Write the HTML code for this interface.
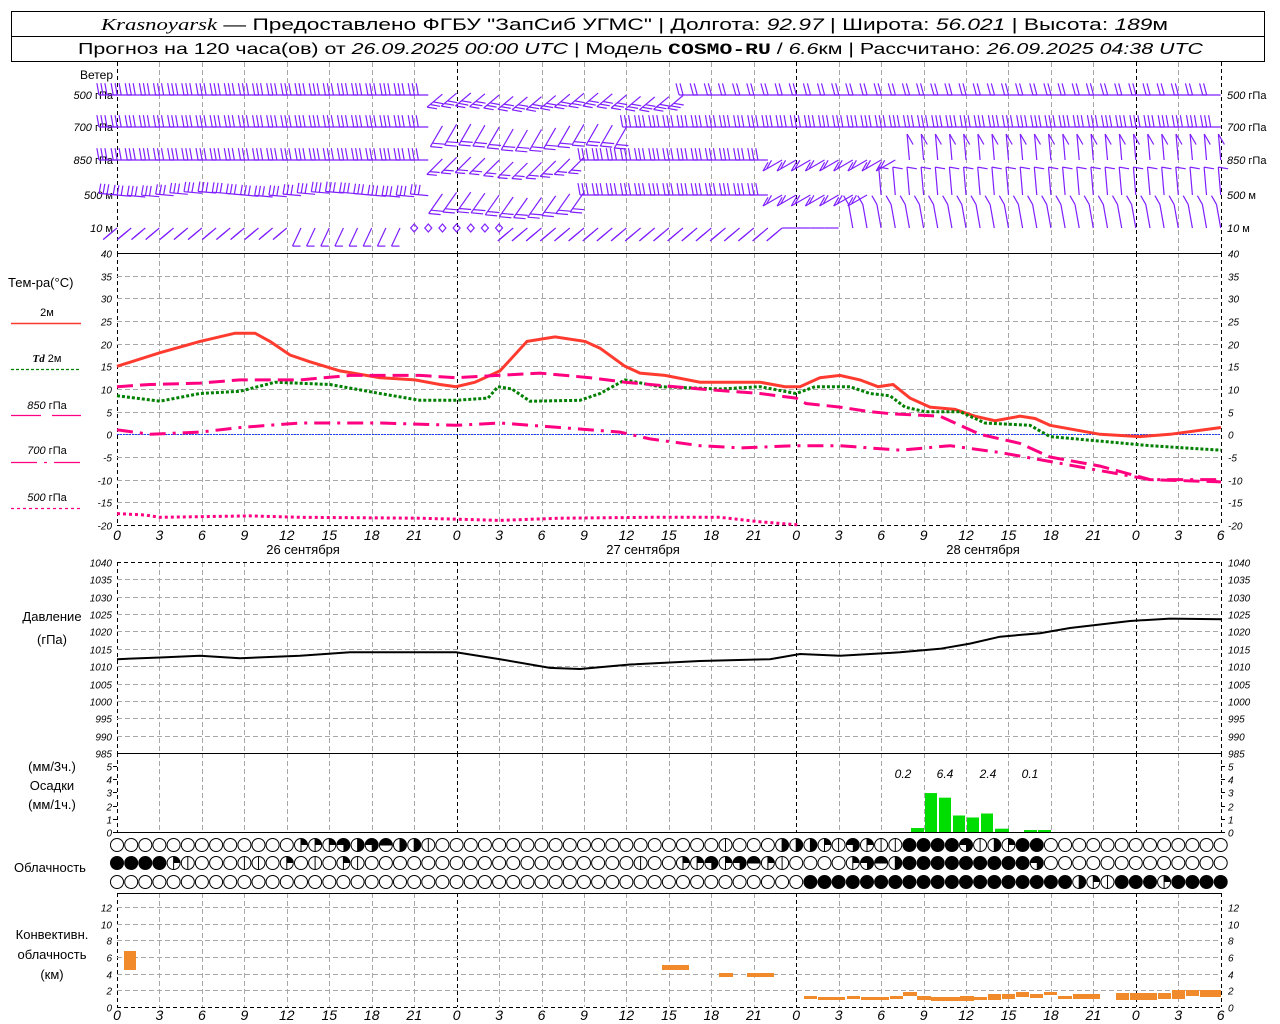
<!DOCTYPE html>
<html><head><meta charset="utf-8">
<style>
html,body{margin:0;padding:0;background:#fff;}
svg{display:block;}
text{font-family:"Liberation Sans",sans-serif;fill:#000;}
.it{font-style:italic;}
.sm{font-size:10px;font-style:italic;}
.lb{font-size:12px;}
</style></head><body>
<svg id="s" width="1280" height="1024" viewBox="0 0 1280 1024" xmlns="http://www.w3.org/2000/svg">
<rect x="0" y="0" width="1280" height="1024" fill="#fff"/>
<rect x="11.5" y="11.5" width="1253" height="50" fill="none" stroke="#000" stroke-width="1"/>
<line x1="11" y1="36.5" x2="1265" y2="36.5" stroke="#000"/>
<text x="101" y="30" font-size="17" textLength="1067" lengthAdjust="spacingAndGlyphs"><tspan font-family="Liberation Serif" font-style="italic">Krasnoyarsk</tspan> — Предоставлено ФГБУ "ЗапСиб УГМС" | Долгота: <tspan font-style="italic">92.97</tspan> | Широта: <tspan font-style="italic">56.021</tspan> | Высота: <tspan font-style="italic">189</tspan>м</text>
<text x="78" y="54" font-size="16" textLength="1125" lengthAdjust="spacingAndGlyphs">Прогноз на 120 часа(ов) от <tspan font-style="italic">26.09.2025 00:00 UTC</tspan>  | Модель <tspan font-family="Liberation Mono" font-weight="bold">COSMO-RU</tspan> / <tspan font-style="italic">6.6</tspan>км | Рассчитано: <tspan font-style="italic">26.09.2025 04:38 UTC</tspan></text>

<g class="lb">
<text x="113" y="79" text-anchor="end">Ветер</text>
<text x="113" y="99" text-anchor="end" font-size="11"><tspan font-style="italic">500</tspan> гПа</text>
<text x="113" y="131" text-anchor="end" font-size="11"><tspan font-style="italic">700</tspan> гПа</text>
<text x="113" y="164" text-anchor="end" font-size="11"><tspan font-style="italic">850</tspan> гПа</text>
<text x="113" y="199" text-anchor="end" font-size="11"><tspan font-style="italic">500</tspan>  м</text>
<text x="113" y="232" text-anchor="end" font-size="11"><tspan font-style="italic">10</tspan>   м</text>
<text x="1227" y="99" font-size="11"><tspan font-style="italic">500</tspan> гПа</text>
<text x="1227" y="131" font-size="11"><tspan font-style="italic">700</tspan> гПа</text>
<text x="1227" y="164" font-size="11"><tspan font-style="italic">850</tspan> гПа</text>
<text x="1227" y="199" font-size="11"><tspan font-style="italic">500</tspan>  м</text>
<text x="1227" y="232" font-size="11"><tspan font-style="italic">10</tspan>   м</text>

<text x="8" y="287" font-size="13">Тем-ра(°С)</text>
<text x="47" y="316" text-anchor="middle" font-size="11">2м</text>
<text x="47" y="362" text-anchor="middle" font-size="11"><tspan font-family="Liberation Serif" font-style="italic" font-weight="bold">Td</tspan>  2м</text>
<text x="47" y="409" text-anchor="middle" font-size="11"><tspan font-style="italic">850</tspan> гПа</text>
<text x="47" y="454" text-anchor="middle" font-size="11"><tspan font-style="italic">700</tspan> гПа</text>
<text x="47" y="501" text-anchor="middle" font-size="11"><tspan font-style="italic">500</tspan> гПа</text>

<text x="303" y="554" text-anchor="middle" font-size="13">26 сентября</text>
<text x="643" y="554" text-anchor="middle" font-size="13">27 сентября</text>
<text x="983" y="554" text-anchor="middle" font-size="13">28 сентября</text>

<text x="52" y="621" text-anchor="middle" font-size="13">Давление</text>
<text x="52" y="644" text-anchor="middle" font-size="13">(гПа)</text>
<text x="52" y="771" text-anchor="middle" font-size="13">(мм/3ч.)</text>
<text x="52" y="790" text-anchor="middle" font-size="13">Осадки</text>
<text x="52" y="809" text-anchor="middle" font-size="13">(мм/1ч.)</text>
<text x="50" y="872" text-anchor="middle" font-size="13">Облачность</text>
<text x="52" y="939" text-anchor="middle" font-size="13">Конвективн.</text>
<text x="52" y="959" text-anchor="middle" font-size="13">облачность</text>
<text x="52" y="979" text-anchor="middle" font-size="13">(км)</text>

<text x="903" y="778" text-anchor="middle" font-size="12" class="it">0.2</text>
<text x="945" y="778" text-anchor="middle" font-size="12" class="it">6.4</text>
<text x="988" y="778" text-anchor="middle" font-size="12" class="it">2.4</text>
<text x="1030" y="778" text-anchor="middle" font-size="12" class="it">0.1</text>
</g>
<line x1="11" y1="323.5" x2="81" y2="323.5" stroke="#ff3b30" stroke-width="1.5"/>
<line x1="11" y1="369.5" x2="81" y2="369.5" stroke="#008000" stroke-width="1.2" stroke-dasharray="3,2"/>
<line x1="11" y1="415.5" x2="81" y2="415.5" stroke="#ff0080" stroke-width="1.2" stroke-dasharray="30,11"/>
<line x1="11" y1="462.5" x2="81" y2="462.5" stroke="#ff0080" stroke-width="1.2" stroke-dasharray="26,7,3,7"/>
<line x1="11" y1="508.5" x2="81" y2="508.5" stroke="#ff0080" stroke-width="1.2" stroke-dasharray="3,3"/>
<g id="g"></g>
</svg>
<script>
(function(){
var g=document.getElementById('g'),h='';
var X0=117,PX=14.15,XR=1221;
function hx(hh){return X0+hh*PX;}
function L(x1,y1,x2,y2,st){h+='<line x1="'+x1.toFixed(1)+'" y1="'+y1.toFixed(1)+'" x2="'+x2.toFixed(1)+'" y2="'+y2.toFixed(1)+'" '+st+'/>';}
var GR='stroke="#a8a8a8" stroke-width="1" stroke-dasharray="5,3"';
var DK='stroke="#000" stroke-width="1" stroke-dasharray="4,3"';
var panels=[[62,253],[253,525],[562,753],[753,832],[893,1007]];
for(var k=0;k<=26;k++){var x=Math.round(X0+k*42.45)+0.5;var day=(k%8==0)||k==26;
 panels.forEach(function(p){L(x,p[0],x,p[1],day?DK:GR);});}
function ty(t){return 253+(40-t)*4.533;}
var tl=['40','35','30','25','20','15','10','5','0','-5','-10','-15','-20'];
for(var i=0;i<13;i++){var t=40-5*i,y=Math.round(ty(t))+0.5;
 if(i>0&&i<12)L(X0,y,XR,y,GR);
 h+='<text class="sm" x="112" y="'+(y+4)+'" text-anchor="end">'+tl[i]+'</text><text class="sm" x="1228" y="'+(y+4)+'">'+tl[i]+'</text>';}
L(X0,253.5,XR,253.5,'stroke="#000"');L(X0,525.5,XR,525.5,DK);
L(X0,434.5,XR,434.5,'stroke="#2040ff" stroke-width="1" stroke-dasharray="2,1"');
function py(p){return 562+(1040-p)*3.473;}
var pl=['1040','1035','1030','1025','1020','1015','1010','1005','1000','995','990','985'];
for(var i=0;i<12;i++){var p=1040-5*i,y=Math.round(py(p))+0.5;
 if(i>0&&i<11)L(X0,y,XR,y,GR);
 h+='<text class="sm" x="112" y="'+(y+4)+'" text-anchor="end" font-size="9">'+pl[i]+'</text><text class="sm" x="1228" y="'+(y+4)+'" font-size="9">'+pl[i]+'</text>';}
L(X0,562.5,XR,562.5,DK);L(X0,753.5,XR,753.5,'stroke="#000"');
var rl=['0','1','2','3','4','5'];
for(var i=0;i<6;i++){var y=Math.round(832-i*13.2)+0.5;
 L(X0-4,y,X0,y,'stroke="#000"');L(XR,y,XR+4,y,'stroke="#000"');
 h+='<text class="sm" x="112" y="'+(y+4)+'" text-anchor="end">'+rl[i]+'</text><text class="sm" x="1228" y="'+(y+4)+'">'+rl[i]+'</text>';}
L(X0,832.5,XR,832.5,'stroke="#000"');
var cl=['0','2','4','6','8','10','12'];
for(var i=0;i<7;i++){var y=Math.round(1007-i*16.7)+0.5;
 if(i>0)L(X0,y,XR,y,GR);
 h+='<text class="sm" x="112" y="'+(y+4)+'" text-anchor="end">'+cl[i]+'</text><text class="sm" x="1228" y="'+(y+4)+'">'+cl[i]+'</text>';}
L(X0,893.5,XR,893.5,'stroke="#000"');L(X0,1007.5,XR,1007.5,DK);
var hl=['0','3','6','9','12','15','18','21','0','3','6','9','12','15','18','21','0','3','6','9','12','15','18','21','0','3','6'];
for(var k=0;k<27;k++){var x=X0+k*42.45;
 h+='<text x="'+x.toFixed(1)+'" y="540" text-anchor="middle" font-size="14" class="it">'+hl[k]+'</text>';
 h+='<text x="'+x.toFixed(1)+'" y="1020" text-anchor="middle" font-size="14" class="it">'+hl[k]+'</text>';}
function path(pts,f,st){var d='';pts.forEach(function(p,i){d+=(i?'L':'M')+p[0]+' '+f(p[1]).toFixed(1)+' ';});h+='<path d="'+d+'" fill="none" '+st+'/>';}
path([[117,15],[160,18],[200,20.5],[235,22.3],[255,22.3],[270,20.5],[290,17.5],[310,16],[340,14],[380,12.5],[415,12],[440,11],[456,10.5],[475,11.5],[500,14],[527,20.5],[555,21.5],[585,20.5],[600,19],[625,15],[640,13.5],[665,13],[700,11.5],[730,11.5],[760,11.5],[785,10.5],[800,10.5],[820,12.5],[840,13],[860,12],[878,10.5],[893,11],[910,8],[930,6],[955,5.5],[975,4],[995,3],[1020,4],[1035,3.5],[1050,2],[1075,1],[1100,0],[1140,-0.5],[1170,0],[1221,1.5]],ty,'stroke="#ff3b30" stroke-width="3"');
path([[117,8.5],[160,7.3],[200,9],[240,9.5],[275,11.5],[330,11],[380,9],[420,7.5],[456,7.5],[488,8],[498,10.5],[512,10],[530,7.3],[580,7.5],[600,9],[625,12],[660,10.5],[720,10],[760,10.5],[796,9],[815,10.5],[850,10.5],[870,9],[890,8.5],[905,6],[925,5],[960,5],[985,2.5],[1030,2],[1050,-0.5],[1100,-1.5],[1150,-2.5],[1221,-3.5]],ty,'stroke="#008000" stroke-width="3" stroke-dasharray="3,2"');
path([[117,10.5],[150,11],[200,11.3],[240,12],[300,12],[350,13],[420,13],[456,12.5],[540,13.5],[590,12.5],[625,11.5],[700,10],[760,9],[796,8],[806,6.8],[840,6],[870,5],[893,4.5],[940,4],[980,0],[1020,-2],[1050,-5],[1100,-7],[1150,-10],[1221,-10.5]],ty,'stroke="#ff0080" stroke-width="3" stroke-dasharray="16,7"');
path([[117,1],[150,0],[200,0.5],[240,1.5],[300,2.5],[380,2.5],[456,2],[500,2.5],[560,1.5],[620,0.5],[650,-1],[700,-2.5],[740,-3],[796,-2.5],[840,-2.5],[900,-3.5],[950,-2.5],[1000,-4],[1050,-6],[1100,-8],[1150,-10],[1221,-10]],ty,'stroke="#ff0080" stroke-width="3" stroke-dasharray="16,7,3,7"');
path([[117,-17.5],[145,-17.8],[160,-18.3],[250,-18],[300,-18.3],[420,-18.5],[500,-19],[560,-18.5],[650,-18.3],[720,-18.3],[760,-19.3],[800,-20]],ty,'stroke="#ff0080" stroke-width="3" stroke-dasharray="3,3"');
path([[117,1012],[160,1012.5],[200,1013],[240,1012.3],[300,1013],[350,1014],[456,1014],[500,1012],[550,1009.5],[580,1009.2],[630,1010.5],[700,1011.5],[770,1012],[800,1013.5],[840,1013],[900,1014],[940,1015],[970,1016.5],[1000,1018.5],[1040,1019.5],[1070,1021],[1130,1023],[1170,1023.7],[1221,1023.5]],py,'stroke="#000" stroke-width="2"');
[[911,924,0.3],[925,937,2.95],[939,951,2.6],[953,965,1.25],[967,979,1.1],[981,993,1.4],[995,1009,0.25],[1024,1037,0.15],[1038,1051,0.15]].forEach(function(b){var hh=b[2]*13.2;h+='<rect x="'+b[0]+'" y="'+(832-hh)+'" width="'+(b[1]-b[0])+'" height="'+hh+'" fill="#00dd00"/>';});
[[124,136,951,970],[662,689,965,970],[719,733,973,977],[747,774,973,977],[804,817,996,999],[818,845,997,1000],[847,860,996,999],[861,889,997,1000],[890,903,996,999],[903,917,992,996],[917,931,996,1000],[931,960,997,1001],[960,974,996,1001],[974,987,997,1000],[988,1001,994,1000],[1002,1015,994,999],[1016,1029,992,997],[1030,1043,994,998],[1044,1057,992,995],[1058,1072,996,999],[1073,1100,994,999],[1116,1129,993,1000],[1130,1157,993,1000],[1158,1171,993,999],[1172,1185,990,999],[1186,1199,990,996],[1200,1221,990,997]].forEach(function(b){h+='<rect x="'+b[0]+'" y="'+b[2]+'" width="'+(b[1]-b[0])+'" height="'+(b[3]-b[2])+'" fill="#f08a2a"/>';});
function row(spec){var a=[];for(var i=0;i<79;i++)a.push('o');spec.forEach(function(s){for(var i=s[0];i<=s[1];i++)a[i]=s[2];});return a;}
var r1=row([[13,15,'q'],[16,16,'t'],[17,17,'h'],[18,18,'t'],[19,19,'e'],[20,20,'h'],[21,21,'h'],[22,22,'l'],[43,43,'l'],[47,47,'h'],[48,49,'h'],[50,50,'q'],[51,51,'l'],[52,52,'t'],[53,53,'q'],[54,55,'l'],[56,59,'f'],[60,60,'t'],[61,61,'l'],[62,62,'h'],[63,63,'q'],[64,65,'f']]);
var r2=row([[0,3,'f'],[4,4,'q'],[5,5,'l'],[9,10,'l'],[12,12,'q'],[14,14,'l'],[16,16,'q'],[17,17,'l'],[37,37,'l'],[40,41,'q'],[42,42,'t'],[43,43,'q'],[44,44,'t'],[45,45,'e'],[46,46,'q'],[47,47,'l'],[52,52,'q'],[53,53,'t'],[54,54,'e'],[55,55,'h'],[56,64,'f'],[65,65,'t']]);
var r3=row([[49,67,'f'],[68,68,'h'],[69,69,'q'],[70,70,'l'],[71,73,'f'],[74,74,'q'],[75,78,'f']]);
function cloud(x,y,c){var r=6.5,s='stroke="#000" stroke-width="1"';
 h+='<circle cx="'+x+'" cy="'+y+'" r="'+r+'" fill="'+(c=='f'?'#000':'#fff')+'" '+s+'/>';
 if(c=='q')h+='<path d="M'+x+' '+y+'V'+(y-r)+'A'+r+' '+r+' 0 0 1 '+(x+r)+' '+y+'Z" fill="#000"/>';
 if(c=='h')h+='<path d="M'+x+' '+(y-r)+'A'+r+' '+r+' 0 0 1 '+x+' '+(y+r)+'Z" fill="#000"/>';
 if(c=='t')h+='<path d="M'+x+' '+y+'H'+(x-r)+'A'+r+' '+r+' 0 1 1 '+x+' '+(y+r)+'Z" fill="#000"/>';
 if(c=='e')h+='<path d="M'+(x-r)+' '+y+'A'+r+' '+r+' 0 0 1 '+(x+r)+' '+y+'Z" fill="#000"/><line x1="'+(x-r)+'" y1="'+y+'" x2="'+(x+r)+'" y2="'+y+'" '+s+'/>';
 if(c=='l'||c=='h'||c=='q')h+='<line x1="'+x+'" y1="'+(y-r)+'" x2="'+x+'" y2="'+(y+r)+'" '+s+'/>';}
for(var i=0;i<79;i++){var x=+(hx(i)).toFixed(1);cloud(x,845,r1[i]);cloud(x,863,r2[i]);cloud(x,882,r3[i]);}
var PC='stroke="#7f1fff" stroke-width="1.2"';
// a: staff angle, n feathers, len, fa: feather angle, fl feather length
function barb(x,y,a,n,len,fa,fl){var r=a*Math.PI/180,dx=Math.cos(r),dy=Math.sin(r);var ex=x+len*dx,ey=y+len*dy;L(x,y,ex,ey,PC);
 var fr=fa*Math.PI/180;for(var i=0;i<n;i++){var px=ex-i*4*dx,py=ey-i*4*dy;L(px,py,px+fl*Math.cos(fr),py+fl*Math.sin(fr),PC);}}
function wrow(y,segs){segs.forEach(function(s){for(var i=s[0];i<=s[1];i++){var x=hx(i);
 if(s[2]=='c'){h+='<path d="M'+x+' '+(y-4)+'L'+(x+3.5)+' '+y+'L'+x+' '+(y+4)+'L'+(x-3.5)+' '+y+'Z" fill="none" '+PC+'/>';continue;}
 var yy=y+(s[7]||0)*Math.sin(i*0.7);barb(x,yy,s[2],s[3],s[4],s[5],s[6]);}});}
wrow(95,[[0,22,180,3,18,-100,12],[23,40,140,3,20,10,10,2],[41,78,180,2,18,-105,12]]);
wrow(127,[[0,22,180,3,18,-100,12],[23,36,120,2,24,5,12,3],[37,78,180,3,18,-100,12]]);
wrow(160,[[0,22,180,3,18,-100,12],[23,33,135,2,22,5,10,3],[34,46,180,3,18,-100,12],[47,55,150,2,22,-60,10],[56,78,-95,1,26,60,12]]);
wrow(195,[[0,22,185,3,18,-80,10,2],[23,33,125,2,24,5,12,3],[34,46,180,3,18,-100,12],[47,53,150,2,22,-60,10],[54,78,-95,1,28,10,10]]);
wrow(228,[[0,12,140,2,18,-40,10],[13,20,115,1,20,0,8],[21,27,'c'],[28,47,140,2,20,-40,10],[48,51,180,0,14,0,0],[52,78,-100,1,24,-120,10]]);
g.innerHTML=h;
})();
</script>
</body></html>
